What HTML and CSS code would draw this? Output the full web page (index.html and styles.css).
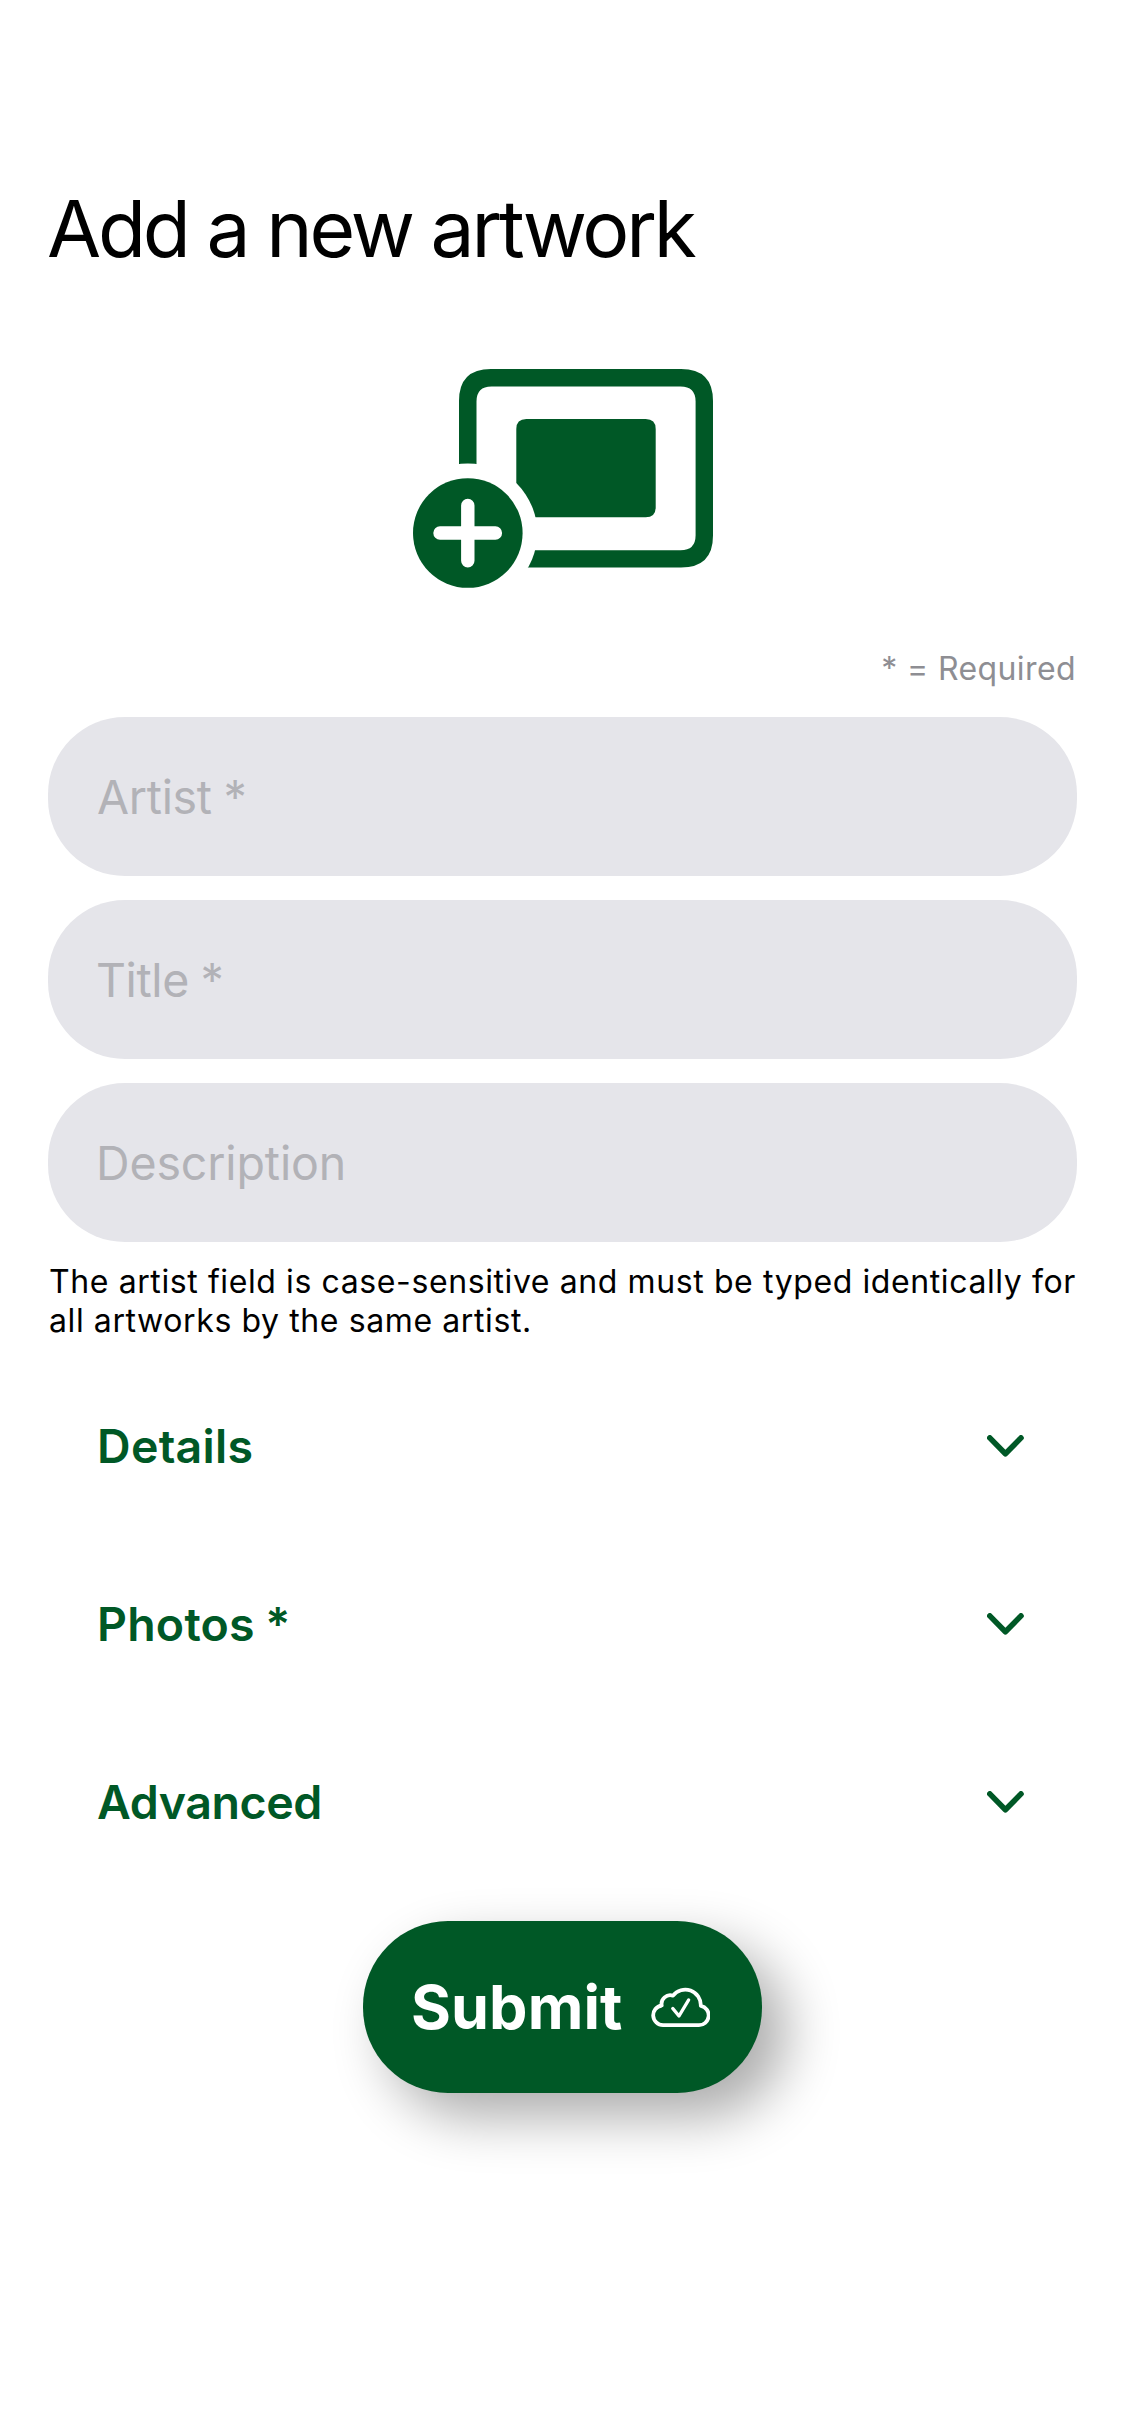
FILE: index.html
```html
<!DOCTYPE html>
<html lang="en">
<head>
<meta charset="utf-8">
<title>Add a new artwork</title>
<link rel="stylesheet" href="styles.css">
</head>
<body>
<main class="page">
  <h1 class="title">Add a new artwork</h1>

  <svg class="hero" width="300" height="219" viewBox="413 369 300 219" aria-hidden="true">
    <defs>
      <mask id="badge-gap" maskUnits="userSpaceOnUse" x="413" y="369" width="300" height="219">
        <rect x="413" y="369" width="300" height="219" fill="#fff"/>
        <circle cx="467.8" cy="533" r="69.5" fill="#000"/>
      </mask>
    </defs>
    <g mask="url(#badge-gap)">
      <path fill-rule="evenodd" d="M491 369H681Q713 369 713 401V535.6Q713 567.6 681 567.6H491Q459 567.6 459 535.6V401Q459 369 491 369ZM491.5 386.4Q476.5 386.4 476.5 401.4V535.2Q476.5 550.2 491.5 550.2H680.5Q695.6 550.2 695.6 535.2V401.4Q695.6 386.4 680.5 386.4Z"/>
      <path d="M526.3 419H645.7Q655.7 419 655.7 429V507.3Q655.7 517.3 645.7 517.3H526.3Q516.3 517.3 516.3 507.3V429Q516.3 419 526.3 419Z"/>
    </g>
    <circle cx="467.8" cy="533" r="54.8"/>
    <path class="plus" d="M440 533H495.4M467.8 505.4V560.8"/>
  </svg>

  <p class="required">* = Required</p>

  <form class="form">
    <div class="fields">
      <input class="field field-artist" type="text" placeholder="Artist *" aria-label="Artist">
      <input class="field field-title" type="text" placeholder="Title *" aria-label="Title">
      <input class="field field-description" type="text" placeholder="Description" aria-label="Description">
    </div>
    <p class="note">The artist field is case-sensitive and must be typed identically for all artworks by the same artist.</p>

    <div class="sections">
      <div class="section"><span class="label-details">Details</span><svg class="chevron" width="37" height="22" viewBox="0 0 37 22"><path d="M2.8 2.9L18.4 18.7L34 2.9"/></svg></div>
      <div class="section"><span class="label-photos">Photos *</span><svg class="chevron" width="37" height="22" viewBox="0 0 37 22"><path d="M2.8 2.9L18.4 18.7L34 2.9"/></svg></div>
      <div class="section"><span class="label-advanced">Advanced</span><svg class="chevron" width="37" height="22" viewBox="0 0 37 22"><path d="M2.8 2.9L18.4 18.7L34 2.9"/></svg></div>
    </div>

    <button class="submit" type="button">
      <span>Submit</span>
      <svg class="cloud" width="60" height="44" viewBox="0 0 60 44">
        <path class="cloud-outline" d="M13 40.2H48.5A9.8 9.8 0 0 0 50.8 20.8A15.5 15.5 0 0 0 23 10.7A8.7 8.7 0 0 0 11.7 20.5A9.9 9.9 0 0 0 13 40.2Z"/>
        <path class="cloud-check" d="M22.8 23.5L29 31L38.6 15"/>
      </svg>
    </button>
  </form>
</main>
</body>
</html>
```
FILE: styles.css
```css
* {
  box-sizing: border-box;
}

body {
  margin: 0;
  background: #fff;
  color: #000;
  font-family: Inter, "Liberation Sans", sans-serif;
}

.page {
  display: flex;
  flex-direction: column;
  min-height: 2436px;
  padding: 184px 48px 0;
}

.title {
  margin: 0 0 0 -1px;
  font-size: 78.5px;
  font-weight: 400;
  line-height: 90px;
  letter-spacing: -3.2px;
}

.hero {
  display: block;
  align-self: center;
  margin-top: 95px;
  fill: #005826;
}

.plus {
  fill: none;
  stroke: #fff;
  stroke-width: 13.4;
  stroke-linecap: round;
}

.required {
  margin: 61px 1px 0 0;
  color: #8e8e93;
  font-size: 32px;
  line-height: 40px;
  letter-spacing: 0.4px;
  text-align: right;
}

.form {
  display: flex;
  flex-direction: column;
  margin-top: 28px;
}

.fields {
  display: flex;
  flex-direction: column;
  gap: 24px;
}

.field {
  width: 100%;
  height: 159px;
  padding: 1px 48px 0;
  border: 0;
  border-radius: 77px;
  background: #e5e5ea;
  color: #000;
  font: 400 46.5px Inter, "Liberation Sans", sans-serif;
}

.field::placeholder {
  color: #b2b2b7;
  opacity: 1;
}

.field-artist {
  padding-left: 49px;
  letter-spacing: -0.3px;
  word-spacing: -1px;
}

.field-title {
  letter-spacing: -0.4px;
  word-spacing: -1px;
}

.field-description {
  letter-spacing: -0.13px;
}

.note {
  width: 1040px;
  margin: 20px 0 0 1px;
  font-size: 32px;
  line-height: 39px;
  letter-spacing: 0.6px;
}

.sections {
  margin-top: 17px;
}

.section {
  display: flex;
  align-items: center;
  justify-content: space-between;
  height: 178px;
  padding: 0 53px 0 49px;
  color: #005826;
  font-size: 46.5px;
  font-weight: 600;
}

.label-details {
  letter-spacing: 0.3px;
}

.label-photos {
  letter-spacing: 0.2px;
  word-spacing: -1.5px;
}

.label-advanced {
  letter-spacing: -0.4px;
}

.chevron {
  fill: none;
  stroke: #005826;
  stroke-width: 5.6;
  stroke-linecap: round;
  stroke-linejoin: round;
}

.submit {
  display: flex;
  align-items: center;
  align-self: center;
  justify-content: space-between;
  width: 399px;
  height: 172px;
  margin-top: 30px;
  padding: 0 52px 0 48px;
  border: 0;
  border-radius: 85px;
  background: #005826;
  box-shadow: 24px 24px 54px rgba(0, 0, 0, 0.33);
  color: #fff;
  font: 700 61px Inter, "Liberation Sans", sans-serif;
  letter-spacing: 0.1px;
}

.cloud {
  fill: none;
  stroke: #fff;
  stroke-linecap: round;
  stroke-linejoin: round;
}

.cloud-outline {
  stroke-width: 3.8;
}

.cloud-check {
  stroke-width: 3.4;
}
```
